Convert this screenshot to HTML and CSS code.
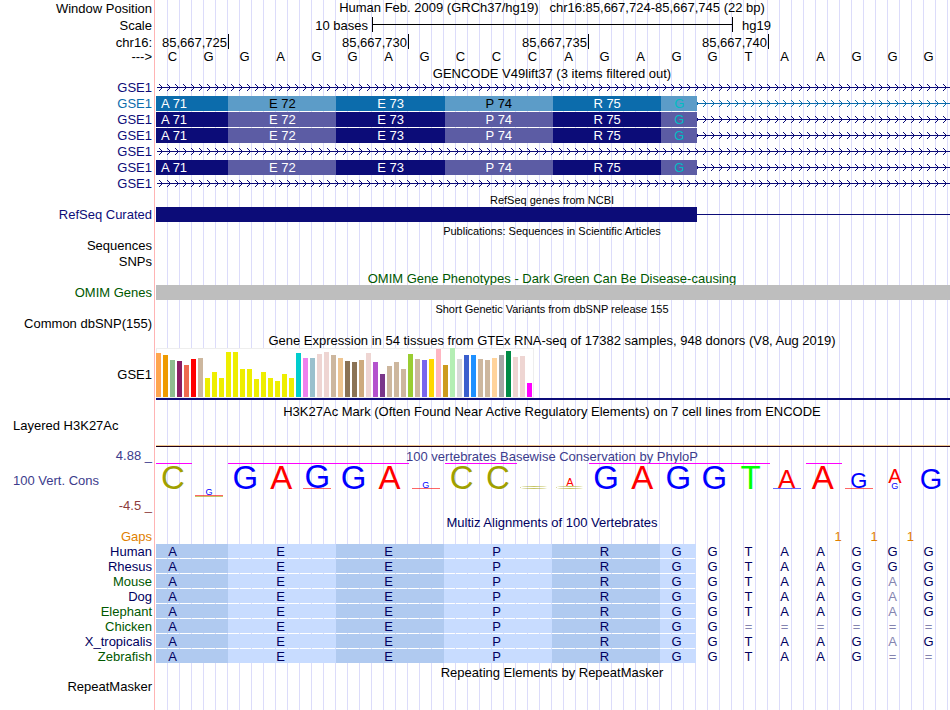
FILE: index.html
```html
<!DOCTYPE html>
<html lang="en">
<head>
    <meta charset="utf-8">
    <title>Human chr16:85,667,724-85,667,745</title>
    <link rel="stylesheet" href="styles.css">
</head>
<body>
    <!-- shared intron arrow patterns -->
    <svg class="defs" aria-hidden="true">
        <defs>
            <pattern id="arrows-navy" width="8" height="16" patternUnits="userSpaceOnUse">
                <path d="M0 7.5H8M3 4L6.500 7.500L3 11" fill="none" stroke="#0c0c78"/>
            </pattern>
            <pattern id="arrows-blue" width="8" height="16" patternUnits="userSpaceOnUse">
                <path d="M0 7.5H8M3 4L6.500 7.500L3 11" fill="none" stroke="#0c6cac"/>
            </pattern>
        </defs>
    </svg>

    <main class="browser">
        <!-- position and scale -->
        <div class="row ruler">
            <div class="label">Window Position</div>
            <h1 class="title">Human Feb. 2009 (GRCh37/hg19) &nbsp; chr16:85,667,724-85,667,745 (22 bp)</h1>
        </div>
        <div class="row ruler">
            <div class="label">Scale</div>
            <div class="track bases scale">
                <span class="scale-size">10 bases</span>
                <span class="scale-bar"></span>
                <span class="scale-db">hg19</span>
            </div>
        </div>
        <div class="row tight coords">
            <div class="label">chr16:</div>
            <div class="track bases ticks">
                <span class="first">85,667,725</span>
                <span>85,667,730</span>
                <span>85,667,735</span>
                <span>85,667,740</span>
            </div>
        </div>
        <div class="row">
            <div class="label">---&gt;</div>
            <div class="track bases">
                <span>C</span><span>G</span><span>G</span><span>A</span><span>G</span><span>G</span><span>A</span><span>G</span><span>C</span><span>C</span><span>C</span>
                <span>A</span><span>G</span><span>A</span><span>G</span><span>G</span><span>T</span><span>A</span><span>A</span><span>G</span><span>G</span><span>G</span>
            </div>
        </div>

        <!-- GENCODE -->
        <h2 class="title">GENCODE V49lift37 (3 items filtered out)</h2>
        <div class="row navy">
            <div class="label">GSE1</div>
            <div class="track"><svg class="intron"><rect x="1" width="100%" height="16" fill="url(#arrows-navy)"/></svg></div>
        </div>
        <div class="row blue">
            <div class="label">GSE1</div>
            <div class="track gene">
                <svg class="intron"><rect width="100%" height="16" fill="url(#arrows-blue)"/></svg>
                <div class="codons"><span class="first">A 71</span><span>E 72</span><span>E 73</span><span>P 74</span><span>R 75</span><span class="part">G</span></div>
            </div>
        </div>
        <div class="row navy">
            <div class="label">GSE1</div>
            <div class="track gene">
                <svg class="intron"><rect width="100%" height="16" fill="url(#arrows-navy)"/></svg>
                <div class="codons"><span class="first">A 71</span><span>E 72</span><span>E 73</span><span>P 74</span><span>R 75</span><span class="part">G</span></div>
            </div>
        </div>
        <div class="row navy">
            <div class="label">GSE1</div>
            <div class="track gene">
                <svg class="intron"><rect width="100%" height="16" fill="url(#arrows-navy)"/></svg>
                <div class="codons"><span class="first">A 71</span><span>E 72</span><span>E 73</span><span>P 74</span><span>R 75</span><span class="part">G</span></div>
            </div>
        </div>
        <div class="row navy">
            <div class="label">GSE1</div>
            <div class="track"><svg class="intron"><rect x="1" width="100%" height="16" fill="url(#arrows-navy)"/></svg></div>
        </div>
        <div class="row navy">
            <div class="label">GSE1</div>
            <div class="track gene">
                <svg class="intron"><rect width="100%" height="16" fill="url(#arrows-navy)"/></svg>
                <div class="codons"><span class="first">A 71</span><span>E 72</span><span>E 73</span><span>P 74</span><span>R 75</span><span class="part">G</span></div>
            </div>
        </div>
        <div class="row navy">
            <div class="label">GSE1</div>
            <div class="track"><svg class="intron"><rect x="1" width="100%" height="16" fill="url(#arrows-navy)"/></svg></div>
        </div>

        <!-- RefSeq -->
        <h2 class="title small">RefSeq genes from NCBI</h2>
        <div class="row navy">
            <div class="label">RefSeq Curated</div>
            <div class="track gene">
                <span class="exon"></span>
                <span class="line"></span>
            </div>
        </div>

        <h2 class="title small">Publications: Sequences in Scientific Articles</h2>
        <div class="row"><div class="label">Sequences</div></div>
        <div class="row"><div class="label">SNPs</div></div>

        <h2 class="title green">OMIM Gene Phenotypes - Dark Green Can Be Disease-causing</h2>
        <div class="row green">
            <div class="label">OMIM Genes</div>
            <div class="track"><div class="omim"></div></div>
        </div>

        <h2 class="title small">Short Genetic Variants from dbSNP release 155</h2>
        <div class="row"><div class="label">Common dbSNP(155)</div></div>

        <!-- GTEx -->
        <h2 class="title tall">Gene Expression in 54 tissues from GTEx RNA-seq of 17382 samples, 948 donors (V8, Aug 2019)</h2>
        <div class="row gtex">
            <div class="label">GSE1</div>
            <div class="track">
                <svg class="chart" width="378" height="50" shape-rendering="crispEdges">
                    <rect x="0.500" y="0.500" width="377" height="49" fill="#fff" stroke="#eee"/>
                    <g transform="matrix(1 0 0 -1 0 49)">
                        <rect x="0" width="5" height="44" fill="#ffa54f"/>
                        <rect x="7" width="5" height="42" fill="#ee9a00"/>
                        <rect x="14" width="5" height="37" fill="#8fbc8f"/>
                        <rect x="21" width="5" height="36" fill="#8b1c62"/>
                        <rect x="28" width="5" height="32" fill="#ee6a50"/>
                        <rect x="35" width="5" height="38" fill="#ff0000"/>
                        <rect x="42" width="5" height="39" fill="#cdb79e"/>
                        <rect x="49" width="5" height="19" fill="#eeee00"/>
                        <rect x="56" width="5" height="25" fill="#eeee00"/>
                        <rect x="63" width="5" height="19" fill="#eeee00"/>
                        <rect x="70" width="5" height="45" fill="#eeee00"/>
                        <rect x="77" width="5" height="45" fill="#eeee00"/>
                        <rect x="84" width="5" height="28" fill="#eeee00"/>
                        <rect x="91" width="5" height="28" fill="#eeee00"/>
                        <rect x="98" width="5" height="18" fill="#eeee00"/>
                        <rect x="105" width="5" height="25" fill="#eeee00"/>
                        <rect x="112" width="5" height="19" fill="#eeee00"/>
                        <rect x="119" width="5" height="16" fill="#eeee00"/>
                        <rect x="126" width="5" height="23" fill="#eeee00"/>
                        <rect x="133" width="5" height="19" fill="#eeee00"/>
                        <rect x="140" width="5" height="44" fill="#00cdcd"/>
                        <rect x="147" width="5" height="39" fill="#ee82ee"/>
                        <rect x="154" width="5" height="39" fill="#9ac0cd"/>
                        <rect x="161" width="5" height="43" fill="#eed5d2"/>
                        <rect x="168" width="5" height="45" fill="#eed5d2"/>
                        <rect x="175" width="5" height="42" fill="#cdb79e"/>
                        <rect x="182" width="5" height="39" fill="#eec591"/>
                        <rect x="189" width="5" height="36" fill="#8b7355"/>
                        <rect x="196" width="5" height="35" fill="#8b7355"/>
                        <rect x="203" width="5" height="37" fill="#cdaa7d"/>
                        <rect x="210" width="5" height="44" fill="#eed5d2"/>
                        <rect x="217" width="5" height="35" fill="#b452cd"/>
                        <rect x="224" width="5" height="23" fill="#7a378b"/>
                        <rect x="231" width="5" height="31" fill="#cdb79e"/>
                        <rect x="238" width="5" height="35" fill="#cdb79e"/>
                        <rect x="245" width="5" height="28" fill="#cdb79e"/>
                        <rect x="252" width="5" height="43" fill="#9acd32"/>
                        <rect x="259" width="5" height="38" fill="#cdb79e"/>
                        <rect x="266" width="5" height="37" fill="#7a67ee"/>
                        <rect x="273" width="5" height="38" fill="#ffd700"/>
                        <rect x="280" width="5" height="48" fill="#ffb6c1"/>
                        <rect x="287" width="5" height="32" fill="#cd9b1d"/>
                        <rect x="294" width="5" height="49" fill="#b4eeb4"/>
                        <rect x="301" width="5" height="38" fill="#d9d9d9"/>
                        <rect x="308" width="5" height="42" fill="#3a5fcd"/>
                        <rect x="315" width="5" height="42" fill="#1e90ff"/>
                        <rect x="322" width="5" height="38" fill="#cdb79e"/>
                        <rect x="329" width="5" height="37" fill="#cdb79e"/>
                        <rect x="336" width="5" height="39" fill="#ffd39b"/>
                        <rect x="343" width="5" height="42" fill="#a6a6a6"/>
                        <rect x="350" width="5" height="46" fill="#008b45"/>
                        <rect x="357" width="5" height="40" fill="#eed5d2"/>
                        <rect x="364" width="5" height="41" fill="#eed5d2"/>
                        <rect x="371" width="5" height="14" fill="#ff00ff"/>
                    </g>
                </svg>
            </div>
        </div>

        <!-- H3K27Ac -->
        <h2 class="title">H3K27Ac Mark (Often Found Near Active Regulatory Elements) on 7 cell lines from ENCODE</h2>
        <div class="row layered">
            <div class="label left">Layered H3K27Ac</div>
            <div class="track"></div>
        </div>

        <!-- PhyloP conservation -->
        <div class="row phylop">
            <div class="label stack">
                <span>4.88 _</span>
                <span class="name">100 Vert. Cons</span>
                <span class="min">-4.5 _</span>
            </div>
            <div class="track">
                <h2>100 vertebrates Basewise Conservation by PhyloP</h2>
                <div class="caps">
                    <span class="cap1"></span><span class="cap2"></span><span class="cap3"></span><span class="cap4"></span><span class="cap5"></span>
                </div>
                <div class="logo">
                    <div><span class="c">C</span></div>
                    <div class="neg"><span class="g s9">G</span><i class="a"></i><i class="c"></i></div>
                    <div><span class="g">G</span></div>
                    <div><span class="a">A</span></div>
                    <div><span class="g">G</span><i class="a"></i></div>
                    <div><span class="g">G</span></div>
                    <div><span class="a">A</span></div>
                    <div><span class="g s9">G</span><i class="a"></i></div>
                    <div><span class="c">C</span></div>
                    <div><span class="c">C</span></div>
                    <div><i class="c flat"></i></div>
                    <div><span class="a s11">A</span><i class="c flat"></i></div>
                    <div><span class="g">G</span></div>
                    <div><span class="a">A</span></div>
                    <div><span class="g">G</span></div>
                    <div><span class="g">G</span></div>
                    <div><span class="t">T</span></div>
                    <div><span class="a s26">A</span><i class="g"></i></div>
                    <div><span class="a">A</span></div>
                    <div><span class="g s22">G</span><i class="a"></i></div>
                    <div><span class="a s20">A</span><span class="g s9">G</span></div>
                    <div><span class="g s29">G</span></div>
                </div>
            </div>
        </div>

        <!-- Multiz -->
        <h2 class="title ink">Multiz Alignments of 100 Vertebrates</h2>
        <div class="row tight gaps">
            <div class="label">Gaps</div>
            <div class="track bases"><span class="gap1">1</span><span>1</span><span>1</span></div>
        </div>
        <div class="row tight ink">
            <div class="label">Human</div>
            <div class="track bases align">
                <b class="start">A</b><b>E</b><b>E</b><b>P</b><b>R</b><b class="end">G</b>
                <span>G</span><span>T</span><span>A</span><span>A</span><span>G</span><span>G</span><span>G</span>
            </div>
        </div>
        <div class="row tight ink">
            <div class="label">Rhesus</div>
            <div class="track bases align">
                <b class="start">A</b><b>E</b><b>E</b><b>P</b><b>R</b><b class="end">G</b>
                <span>G</span><span>T</span><span>A</span><span>A</span><span>G</span><span>G</span><span>G</span>
            </div>
        </div>
        <div class="row tight ink">
            <div class="label green">Mouse</div>
            <div class="track bases align">
                <b class="start">A</b><b>E</b><b>E</b><b>P</b><b>R</b><b class="end">G</b>
                <span>G</span><span>T</span><span>A</span><span>A</span><span>G</span><span class="diff">A</span><span>G</span>
            </div>
        </div>
        <div class="row tight ink">
            <div class="label">Dog</div>
            <div class="track bases align">
                <b class="start">A</b><b>E</b><b>E</b><b>P</b><b>R</b><b class="end">G</b>
                <span>G</span><span>T</span><span>A</span><span>A</span><span>G</span><span class="diff">A</span><span>G</span>
            </div>
        </div>
        <div class="row tight ink">
            <div class="label green">Elephant</div>
            <div class="track bases align">
                <b class="start">A</b><b>E</b><b>E</b><b>P</b><b>R</b><b class="end">G</b>
                <span>G</span><span>T</span><span>A</span><span>A</span><span>G</span><span class="diff">A</span><span>G</span>
            </div>
        </div>
        <div class="row tight ink">
            <div class="label green">Chicken</div>
            <div class="track bases align">
                <b class="start">A</b><b>E</b><b>E</b><b>P</b><b>R</b><b class="end">G</b>
                <span>G</span><span class="diff">=</span><span class="diff">=</span><span class="diff">=</span><span class="diff">=</span><span class="diff">=</span><span class="diff">=</span>
            </div>
        </div>
        <div class="row tight ink">
            <div class="label">X_tropicalis</div>
            <div class="track bases align">
                <b class="start">A</b><b>E</b><b>E</b><b>P</b><b>R</b><b class="end">G</b>
                <span>G</span><span>T</span><span>A</span><span>A</span><span>G</span><span class="diff">A</span><span>G</span>
            </div>
        </div>
        <div class="row tight ink">
            <div class="label green">Zebrafish</div>
            <div class="track bases align">
                <b class="start">A</b><b>E</b><b>E</b><b>P</b><b>R</b><b class="end">G</b>
                <span>G</span><span>T</span><span>A</span><span>A</span><span>G</span><span class="diff">=</span><span class="diff">=</span>
            </div>
        </div>

        <h2 class="title">Repeating Elements by RepeatMasker</h2>
        <div class="row"><div class="label">RepeatMasker</div></div>
    </main>
</body>
</html>
```
FILE: styles.css
```css
* {
    box-sizing: border-box;
}
body {
    margin: 0;
    background: #fff;
    color: #000;
    font-family: "Liberation Sans", Arial, Helvetica, sans-serif;
    font-size: 13px;
    line-height: 15px;
}
.defs {
    position: absolute;
    width: 0;
    height: 0;
}

/* red divider, blank label column, guide lines every 12px */
.browser {
    min-height: 100vh;
    background:
        linear-gradient(#ffb4b4, #ffb4b4) 154px 0 / 1px 100% no-repeat,
        linear-gradient(#fff, #fff) 0 0 / 156px 100% no-repeat,
        linear-gradient(to right, #dcdcfa 1px, transparent 1px) 11px 0 / 12px 100% repeat-x;
}
.row {
    display: flex;
    min-height: 16px;
}
.row.tight {
    min-height: 15px;
}
.row.ruler {
    min-height: 17px;
    line-height: 17px;
}
.row.coords {
    height: 15px;
    line-height: 17px;
}
.label {
    flex: none;
    width: 156px;
    padding-right: 4px;
    text-align: right;
    white-space: nowrap;
}
.label.left {
    padding-left: 13px;
    text-align: left;
}
.track {
    flex: 1;
    min-width: 0;
}
h1, h2 {
    margin: 0;
    font-size: 13px;
    font-weight: normal;
    text-align: center;
    white-space: nowrap;
}
.title {
    height: 15px;
    margin: 0 2px 0 156px;
    line-height: 17px;
}
.ruler .title {
    flex: 1;
    margin: 0 2px 0 0;
    line-height: 15px;
}
.title.small {
    font-size: 11px;
}
.title.tall {
    height: 16px;
}

/* text colours */
.navy {
    color: #0c0c78;
}
.blue {
    color: #0c6cac;
}
.green {
    color: #005800;
}
.ink {
    color: #000060;
}

/* one column per base */
.bases {
    display: grid;
    grid-template-columns: repeat(22, 1fr);
    margin-right: 2px;
    text-align: center;
}
.bases > span {
    padding-right: 3px;
}
.scale .scale-size {
    grid-column: 1 / 7;
    padding-right: 4px;
    text-align: right;
}
.scale .scale-bar {
    grid-column: 7 / 17;
    height: 15px;
    margin-right: -1px;
    padding: 0;
    border: solid #000;
    border-width: 0 1px;
    background: linear-gradient(#000, #000) 0 7px / 100% 1px no-repeat;
}
.scale .scale-db {
    grid-column: 17 / 23;
    padding-left: 10px;
    text-align: left;
}
.ticks > span {
    grid-column: span 5;
    height: 15px;
    margin-right: -1px;
    padding-right: 1px;
    border-right: 1px solid #000;
    text-align: right;
    white-space: nowrap;
}
.ticks > .first {
    grid-column: span 2;
}

/* gene models, codons lie over the intron line */
.gene {
    display: grid;
    grid-template-columns: repeat(22, 1fr);
    grid-template-rows: 15px;
}
.intron {
    display: block;
    grid-area: 1 / 1 / 2 / 23;
    width: 100%;
    height: 16px;
}
.codons {
    display: grid;
    grid-area: 1 / 1 / 2 / 16;
    grid-template-columns: repeat(15, 1fr);
    z-index: 1;
    text-align: center;
}
.codons span {
    grid-column: span 3;
    background: #0c0c78;
    color: #fff;
    white-space: nowrap;
}
.codons span:nth-child(even) {
    background: #5c5ca4;
}
.blue .codons span {
    background: #0c6cac;
}
.blue .codons span:nth-child(even) {
    background: #5c9cc8;
    color: #000;
}
.codons .first {
    grid-column: span 2;
    padding-right: 36px;
}
.codons .part,
.blue .codons .part:nth-child(even) {
    grid-column: span 1;
    color: #00bcc4;
}
.exon {
    grid-column: 1 / 16;
    background: #0c0c78;
}
.line {
    grid-column: 16 / 23;
    height: 1px;
    align-self: center;
    background: #0c0c78;
}
.omim {
    height: 15px;
    background: #bebebe;
}

/* expression chart */
.gtex {
    padding-bottom: 3px;
}
.gtex .label {
    align-self: center;
}
.gtex .track {
    border-bottom: 2px solid #0c0c78;
}
.chart {
    display: block;
}

.layered {
    padding-bottom: 1px;
}
.layered .track {
    height: 29px;
    border-bottom: 1px solid #200018;
    box-shadow: inset 0 -1px #f0c890;
}

/* conservation logo */
.phylop {
    min-height: 66px;
    color: #3c3c8c;
}
.phylop h2 {
    height: 15px;
    margin-right: 2px;
    line-height: 17px;
}
.stack {
    display: flex;
    flex-direction: column;
    gap: 10px;
}
.stack .name {
    padding-left: 13px;
    text-align: left;
}
.stack .min {
    color: #8c3c3c;
}
.caps, .logo {
    display: grid;
    grid-template-columns: repeat(22, 1fr);
}
.caps span {
    height: 1px;
    background: #f0f;
}
.caps .cap1 {
    grid-column: 1 / 2;
}
.caps .cap2 {
    grid-column: 3 / 8;
}
.caps .cap3 {
    grid-column: 9 / 11;
}
.caps .cap4 {
    grid-column: 13 / 18;
}
.caps .cap5 {
    grid-column: 19 / 20;
}
.logo {
    grid-template-rows: 24px;
    margin-top: 1px;
    font-size: 33px;
    line-height: 23px;
}
.logo div {
    display: flex;
    flex-direction: column;
    align-items: center;
    justify-content: flex-end;
    padding-right: 2px;
}
/* negative scores hang below the axis */
.logo .neg {
    justify-content: flex-start;
    padding-top: 24px;
}
.logo i {
    flex: none;
    width: 28px;
    height: 1px;
    background: currentColor;
    opacity: 0.6;
}
.logo .flat {
    height: 3px;
    border: 1px solid;
    border-right-color: transparent;
    border-radius: 50%;
    background: none;
}
.logo .a {
    color: #f00;
}
.logo .c {
    color: #a0a000;
}
.logo .g {
    color: #00f;
}
.logo .t {
    color: #0f0;
}
.logo .s29 {
    font-size: 29px;
    line-height: 20px;
}
.logo .s26 {
    font-size: 26px;
    line-height: 18px;
}
.logo .s22 {
    font-size: 22px;
    line-height: 15px;
}
.logo .s20 {
    font-size: 20px;
    line-height: 14px;
}
.logo .s11 {
    font-size: 11px;
    line-height: 8px;
}
.logo .s9 {
    font-size: 9px;
    line-height: 6px;
}

/* alignments */
.gaps {
    color: #e08000;
}
.gaps .bases {
    margin-right: 0;
}
.gaps .bases > span {
    padding: 0;
    text-align: right;
}
.gaps .gap1 {
    grid-column: 19;
}
.align b {
    grid-column: span 3;
    height: 14px;
    padding-right: 3px;
    background: #c8dcff;
    font-weight: normal;
}
.align b:nth-of-type(odd) {
    background: #b0caf0;
}
.align .start {
    grid-column: span 2;
    padding-right: 39px;
}
.align .end {
    grid-column: span 1;
}
.align .diff {
    color: #8484b0;
}
```
